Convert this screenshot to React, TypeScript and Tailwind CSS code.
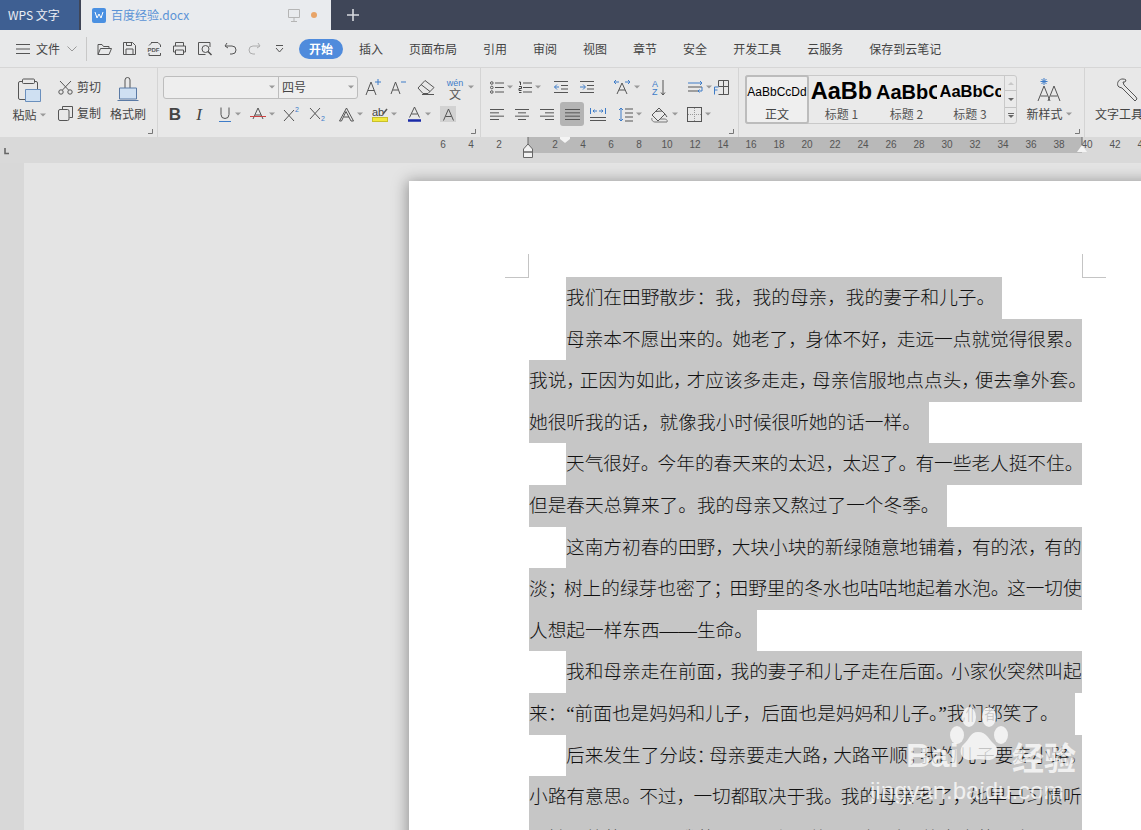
import React from "react";

const FS = 18.67;

type Line = { text: string; indent?: boolean; width: number; fit?: boolean };

const lines: Line[] = [
  { text: "我们在田野散步：我，我的母亲，我的妻子和儿子。", indent: true, width: 436 },
  { text: "母亲本不愿出来的。她老了，身体不好，走远一点就觉得很累。", indent: true, width: 516, fit: true },
  { text: "我说，正因为如此，才应该多走走，母亲信服地点点头，便去拿外套。", width: 553, fit: true },
  { text: "她很听我的话，就像我小时候很听她的话一样。", width: 400 },
  { text: "天气很好。今年的春天来的太迟，太迟了。有一些老人挺不住。", indent: true, width: 516, fit: true },
  { text: "但是春天总算来了。我的母亲又熬过了一个冬季。", width: 418 },
  { text: "这南方初春的田野，大块小块的新绿随意地铺着，有的浓，有的", indent: true, width: 516, fit: true },
  { text: "淡；树上的绿芽也密了；田野里的冬水也咕咕地起着水泡。这一切使", width: 553, fit: true },
  { text: "人想起一样东西——生命。", width: 228 },
  { text: "我和母亲走在前面，我的妻子和儿子走在后面。小家伙突然叫起", indent: true, width: 516, fit: true },
  { text: "来：“前面也是妈妈和儿子，后面也是妈妈和儿子。”我们都笑了。", width: 546 },
  { text: "后来发生了分歧：母亲要走大路，大路平顺；我的儿子要走小路，", indent: true, width: 516, fit: true },
  { text: "小路有意思。不过，一切都取决于我。我的母亲老了，她早已习惯听", width: 553, fit: true },
  { text: "从她强壮的儿子；我的儿子还小，他还习惯听从他高大的父亲；", width: 553, fit: true },
];

const isPunct = (c: string) => "，。：；".includes(c);

const DocLine = ({ line }: { line: Line }) => {
  const chars = Array.from(line.text);
  const count = chars.filter(isPunct).length;
  const squeeze = line.fit && count ? Math.max(0, (chars.length * FS - line.width) / count) : 0;
  return (
    <div className={`h-[41.6px] flex ${line.indent ? "pl-[37px]" : ""}`}>
      <div
        className="bg-[#c6c6c6] h-full whitespace-nowrap overflow-hidden text-[18.67px] leading-[41.6px] font-light text-[#111] [font-family:'Liberation_Serif','Noto_Sans_CJK_SC',serif]"
        style={{ width: line.width }}
      >
        {chars.map((c, i) =>
          isPunct(c) ? (
            <span key={i} style={{ marginRight: -squeeze }}>{c}</span>
          ) : (
            <span key={i}>{c}</span>
          )
        )}
      </div>
    </div>
  );
};

const Svg = ({ w = 18, h = 18, children }: { w?: number; h?: number; children: React.ReactNode }) => (
  <svg width={w} height={h} viewBox={`0 0 ${w} ${h}`} fill="none" stroke="#555" strokeWidth="1" className="shrink-0">
    {children}
  </svg>
);

const Caret = () => (
  <svg width="6" height="4" viewBox="0 0 6 4" className="shrink-0 ml-[3px]">
    <path d="M0 0.5h6L3 3.5z" fill="#999" />
  </svg>
);

const Launcher = () => (
  <svg width="6" height="6" viewBox="0 0 6 6" className="absolute right-[4px] bottom-[3px]">
    <path d="M5.5 1v4.5H1" stroke="#777" fill="none" />
  </svg>
);

// every ribbon button is 24 wide, the icon stays centred and the caret hangs off to the right
const Cell = ({ ml = "", caret, active, children }: { ml?: string; caret?: boolean; active?: boolean; children: React.ReactNode }) => (
  <div className={`flex items-center justify-center w-[24px] h-[24px] shrink-0 ${ml}`}>
    {caret && <span className="w-[9px] shrink-0" />}
    {active ? (
      <div className="w-[24px] h-[24px] rounded-[3px] bg-[#b4b4b4] flex items-center justify-center shrink-0">{children}</div>
    ) : (
      children
    )}
    {caret && <Caret />}
  </div>
);

const HLines = ({ rows }: { rows: [number, number][] }) => (
  <>
    {rows.map(([x, w], i) => (
      <path key={i} d={`M${x} ${1.5 + i * (10 / (rows.length - 1))}h${w}`} />
    ))}
  </>
);

const QuickIcons = () => (
  <div className="flex items-center gap-[10px] ml-[10px]">
    <Svg w={15} h={14}><path d="M1 12.500V2.500h4l1.500 2h5.500v2M1 12.500l2.500-6h11l-2.500 6z" /></Svg>
    <Svg w={15} h={15}><path d="M1.500 1.500h9l3 3v9h-12zM4 13.500V8h7v5.500M4.500 1.500v3h5v-3" /></Svg>
    <Svg w={15} h={16}>
      <path d="M4 1.500h7l2.500 2.500v2M2 12v2.500h11.500V12M5 1.500L2 4.500" />
      <text x="0.500" y="11" fontSize="6" fontWeight="700" fill="#555" stroke="none" fontFamily="Liberation Sans">PDF</text>
    </Svg>
    <Svg w={15} h={15}><path d="M3.500 5V1.500h8V5M3.500 11H1.500V5h12v6h-2M3.500 9h8v4.500h-8z" /></Svg>
    <Svg w={16} h={15}><path d="M13 6V1.500H1.500v12h7" /><circle cx="8.500" cy="8" r="3.500" /><path d="M11 10.500l3.500 3.500" stroke="#4a4a4a" strokeWidth="1.400" /></Svg>
    <div className="ml-[1px]">
      <Svg w={14} h={13}><path d="M3 1L1 4l3 2M1.500 4H8a4 4 0 0 1 0 8H6" /></Svg>
    </div>
    <div className="ml-[-1px] opacity-40">
      <Svg w={14} h={13}><path d="M11 1l2 3-3 2M12.500 4H6a4 4 0 0 0 0 8h2" /></Svg>
    </div>
    <div className="ml-[4px]">
      <Svg w={9} h={9}><path d="M1 1.500h7M1 4l3.500 4L8 4" /></Svg>
    </div>
  </div>
);

const tabs = ["插入", "页面布局", "引用", "审阅", "视图", "章节", "安全", "开发工具", "云服务", "保存到云笔记"];

const FontRowTwo = () => (
  <div className="flex items-center">
    <Cell><span className="text-[17px] font-bold text-[#444] leading-none [font-family:'Liberation_Sans',sans-serif]">B</span></Cell>
    <Cell><span className="text-[17px] italic text-[#444] leading-none [font-family:'Liberation_Serif',serif]">I</span></Cell>
    <Cell ml="ml-[2px]" caret>
      <Svg w={14} h={17}><path d="M3 1.500v7a4 4 0 0 0 8 0v-7" /><path d="M1 15.500h12" stroke="#3e7cc8" /></Svg>
    </Cell>
    <Cell ml="ml-[9px]" caret>
      <Svg w={16} h={16}><path d="M3 13L8 2l5 11M5 9h6" /><path d="M0 10.500h16" stroke="#c44" /></Svg>
    </Cell>
    <Cell ml="ml-[10px]">
      <Svg w={18} h={16}><path d="M1 4l10 11M11 4L1 15" /><text x="12" y="6" fontSize="7" fill="#3e7cc8" stroke="none" fontFamily="Liberation Sans">2</text></Svg>
    </Cell>
    <Cell ml="ml-[2px]">
      <Svg w={18} h={16}><path d="M1 2l10 11M11 2L1 13" /><text x="12" y="15" fontSize="7" fill="#3e7cc8" stroke="none" fontFamily="Liberation Sans">2</text></Svg>
    </Cell>
    <Cell ml="ml-[4px]" caret>
      <Svg w={15} h={15}><path d="M2.500 14h-2L7.500 1l7 13h-2.500l-5-9.500zM5 10h5" /></Svg>
    </Cell>
    <Cell ml="ml-[10px]" caret>
      <Svg w={16} h={16}>
        <rect x="0.500" y="11.500" width="15" height="4" fill="#f2e93c" stroke="#c9c02a" />
        <text x="0" y="10" fontSize="11" fill="#444" stroke="none" fontFamily="Liberation Sans">ab</text>
        <path d="M11 8l4-5" stroke="#555" strokeWidth="1.500" />
      </Svg>
    </Cell>
    <Cell ml="ml-[10px]" caret>
      <Svg w={15} h={16}><path d="M2.500 11.500L7.500 1l5 10.500M4.500 8h6" /><path d="M1 14.500h13" stroke="#1a2aa8" strokeWidth="2.500" /></Svg>
    </Cell>
    <Cell ml="ml-[10px]">
      <div className="w-[16px] h-[16px] bg-[#d2d2d2] flex items-center justify-center">
        <Svg w={13} h={13}><path d="M1.500 12.500L6.500 1l5 11.500M3.500 8.500h6" /></Svg>
      </div>
    </Cell>
  </div>
);

const ParaRowOne = () => (
  <div className="flex items-center">
    <Cell caret>
      <Svg w={14} h={13}><circle cx="1.800" cy="2" r="1.300" /><circle cx="1.800" cy="6.500" r="1.300" /><circle cx="1.800" cy="11" r="1.300" /><path d="M5 2h9M5 6.500h9M5 11h9" /></Svg>
    </Cell>
    <Cell ml="ml-[4px]" caret>
      <Svg w={14} h={13}><path d="M1 1h1.500v3M1 5.500h2.500v2H1v2h2.500M1 11.500h2.500" stroke="#444" /><path d="M5 2h9M5 6.500h9M5 11h9" /></Svg>
    </Cell>
    <Cell ml="ml-[12px]"><Svg w={14} h={12}><path d="M0 .5h14M7 4.500h7M7 8h7M0 11.500h14" /><path d="M5 6H0.500M3 3.500L.5 6 3 8.500" stroke="#3e7cc8" /></Svg></Cell>
    <Cell ml="ml-[2px]"><Svg w={14} h={12}><path d="M0 .5h14M7 4.500h7M7 8h7M0 11.500h14" /><path d="M0 6h5M3 3.500L5.500 6 3 8.500" stroke="#3e7cc8" /></Svg></Cell>
    <Cell ml="ml-[11px]" caret>
      <Svg w={18} h={16}><path d="M4 15L9 4l5 11M6 11h6" /><path d="M1 3h5M3 1L1 3l2 2M17 3h-5M15 1l2 2-2 2" stroke="#3e7cc8" /></Svg>
    </Cell>
    <Cell ml="ml-[13px]">
      <Svg w={14} h={17}><text x="0" y="8" fontSize="9" fill="#3e7cc8" stroke="none" fontFamily="Liberation Sans">A</text><text x="0" y="16" fontSize="9" fill="#3e7cc8" stroke="none" fontFamily="Liberation Sans">Z</text><path d="M11 1v15M9 13.500l2 2.500 2-2.500" /></Svg>
    </Cell>
    <Cell ml="ml-[12px]" caret>
      <Svg w={15} h={14}><path d="M0 3h14M12 1l2 2-2 2" stroke="#3e7cc8" /><path d="M0 7h14M0 11h10" /><path d="M14 7v4h-4M11.500 9.500L10 11l1.500 1.500" stroke="#3e7cc8" /></Svg>
    </Cell>
    <Cell ml="ml-[2px]">
      <Svg w={17} h={17}><path d="M5.500 1.500h10v14h-10M5.500 1.500v6h10M10.500 1.500v14" /><path d="M1.500 8h4M1.500 8v7.500M1.500 11h3" stroke="#3e7cc8" /></Svg>
    </Cell>
  </div>
);

const Align = ({ rows }: { rows: [number, number][] }) => (
  <Svg w={15} h={13}><HLines rows={rows} /></Svg>
);

const ParaRowTwo = () => (
  <div className="flex items-center">
    <Cell><Align rows={[[0, 14], [0, 9], [0, 14], [0, 9]]} /></Cell>
    <Cell ml="ml-[1px]"><Align rows={[[0, 14], [3, 8], [0, 14], [3, 8]]} /></Cell>
    <Cell ml="ml-[1px]"><Align rows={[[0, 14], [5, 9], [0, 14], [5, 9]]} /></Cell>
    <Cell ml="ml-[1px]" active><Align rows={[[0, 15], [0, 15], [0, 15], [0, 15]]} /></Cell>
    <Cell ml="ml-[2px]">
      <Svg w={16} h={14}><path d="M0 10.500h16M0 13.500h16" /><path d="M.5 1v6M15.500 1v6M3 4h4M3 4l1.500-1.500M3 4l1.500 1.500M13 4H9M13 4l-1.500-1.500M13 4l-1.500 1.500" stroke="#3e7cc8" /></Svg>
    </Cell>
    <Cell ml="ml-[3px]" caret>
      <Svg w={15} h={15}><path d="M7 2h8M7 6h8M7 10h8M7 14h8" /><path d="M3 1v13M1 3l2-2 2 2M1 12l2 2 2-2" stroke="#3e7cc8" /></Svg>
    </Cell>
    <Cell ml="ml-[11px]" caret>
      <Svg w={18} h={17}><path d="M1 9l7-7 6 6-7 7zM4 5.500L11 5" /><path d="M1 12c-1 2 1 4 3 4h12c1-2-1-3-3-3H9" stroke="#777" /><path d="M14 8l2 3" /></Svg>
    </Cell>
    <Cell ml="ml-[10px]" caret>
      <Svg w={15} h={15}><rect x="0.500" y="0.500" width="14" height="14" /><path d="M7.500 1v13M1 7.500h13" stroke="#999" strokeDasharray="1 1" /></Svg>
    </Cell>
  </div>
);

const GalleryItem = ({ label, sample, cls, w }: { label: string; sample: string; cls: string; w: string }) => (
  <div className={`flex flex-col items-center shrink-0 overflow-hidden ${w}`}>
    <div className={`h-[31px] flex items-center whitespace-nowrap text-black font-bold [font-family:'Liberation_Sans',sans-serif] ${cls}`}>{sample}</div>
    <div className="text-[12px] leading-[14px] text-[#555] whitespace-nowrap">{label}</div>
  </div>
);

const ScrollBtn = ({ h, children, last }: { h: string; children: React.ReactNode; last?: boolean }) => (
  <div className={`flex items-center justify-center ${h} ${last ? "" : "border-b border-[#c4c4c4]"}`}>
    {children}
  </div>
);

const StyleGallery = () => (
  <div className="ml-[6px] mt-[7px] w-[272px] h-[49px] flex rounded-[3px] border border-[#c9c9c9] bg-[#eaeaea] shrink-0">
    <div className="w-[60px] h-[45px] -my-px -ml-px flex flex-col items-center rounded-[3px] border-2 border-[#bcbcbc] bg-[#efefef] shrink-0 box-content">
      <div className="h-[30px] flex items-center text-[12px] text-black [font-family:'Liberation_Sans',sans-serif]">AaBbCcDd</div>
      <div className="text-[12px] leading-[14px] text-[#444]">正文</div>
    </div>
    <GalleryItem label="标题 1" sample="AaBb" cls="text-[23.500px]" w="w-[65px]" />
    <GalleryItem label="标题 2" sample="AaBbCc" cls="text-[20px] w-[61px] overflow-hidden" w="w-[65px]" />
    <GalleryItem label="标题 3" sample="AaBbCcDd" cls="text-[16.500px] w-[61px] overflow-hidden" w="w-[62px]" />
    <div className="w-[12px] ml-auto border-l border-[#c9c9c9] flex flex-col shrink-0">
      <ScrollBtn h="h-[15px]"><span className="w-0 h-0 border-x-[3px] border-x-transparent border-b-[3px] border-b-[#c8c8c8]" /></ScrollBtn>
      <ScrollBtn h="h-[17px]"><span className="w-0 h-0 border-x-[3px] border-x-transparent border-t-[3px] border-t-[#666]" /></ScrollBtn>
      <ScrollBtn h="h-[15px]" last><span className="w-[6px] h-[6px] border-t border-[#666] flex items-center justify-center"><span className="w-0 h-0 border-x-[3px] border-x-transparent border-t-[3px] border-t-[#666]" /></span></ScrollBtn>
    </div>
  </div>
);

const rulerNums = [6, 4, 2, 0, ...Array.from({ length: 22 }, (_, i) => (i + 1) * 2)];

export default function App() {
  return (
    <div className="w-[1141px] h-[830px] overflow-hidden flex flex-col bg-[#e4e4e4] relative text-[#444] [font-family:'Noto_Sans_CJK_SC','Liberation_Sans',sans-serif]">
      {/* title bar */}
      <div className="h-[30px] bg-[#3f4658] flex shrink-0">
        <div className="w-[79px] bg-[#3e5f92] text-white/90 text-[12px] leading-[30px] pl-[8px] whitespace-pre">WPS 文字</div>
        <div className="ml-[2px] w-[250px] bg-[#e9ebee] flex items-center pl-[11px] pr-[11px]">
          <div className="w-[14px] h-[15px] rounded-[2px] bg-[#4a90e2] flex items-center justify-center shrink-0">
            <svg width="10" height="8" viewBox="0 0 10 8" fill="none" stroke="#fff" strokeWidth="1"><path d="M1 1l2 6 2-4 2 4 2-6" /></svg>
          </div>
          <span className="ml-[5px] text-[12px] text-[#5b93d6]">百度经验.docx</span>
          <svg width="12" height="13" viewBox="0 0 12 13" fill="none" stroke="#b5b5b5" className="ml-[99px]"><path d="M.5.500h11v8H.5zM6 8.500v3.500M3 12.500h6" /></svg>
          <span className="ml-[11px] w-[6px] h-[6px] rounded-full bg-[#e8a468]" />
        </div>
        <div className="ml-[16px] flex items-center">
          <svg width="12" height="12" viewBox="0 0 12 12" stroke="#d8dadf" strokeWidth="1.600"><path d="M6 0v12M0 6h12" /></svg>
        </div>
      </div>

      {/* menu row */}
      <div className="h-[38px] bg-[#e8e9ea] border-b border-[#d6d6d6] flex items-center shrink-0 text-[12px]">
        <div className="ml-[16px] flex items-center">
          <svg width="14" height="10" viewBox="0 0 14 10" stroke="#555"><path d="M0 .5h14M0 5h14M0 9.500h14" /></svg>
          <span className="ml-[6px]">文件</span>
          <svg width="10" height="6" viewBox="0 0 10 6" fill="none" stroke="#999" className="ml-[7px]"><path d="M.5.500L5 5 9.500.5" /></svg>
        </div>
        <div className="ml-[9px] w-px h-[24px] bg-[#c8c8c8]" />
        <QuickIcons />
        <div className="ml-[15px] w-[44px] h-[20px] rounded-full bg-[#4f8bdc] text-white font-bold text-center leading-[20px]">开始</div>
        <div className="ml-[16px] flex gap-[26px]">
          {tabs.map((t) => <span key={t} className="leading-[20px]">{t}</span>)}
        </div>
      </div>

      {/* ribbon */}
      <div className="h-[69px] bg-[#e8e8e8] flex shrink-0 overflow-hidden">
        {/* clipboard */}
        <div className="w-[158px] relative border-r border-[#d4d4d4] flex shrink-0 text-[12px]">
          <div className="w-[57px] flex flex-col items-center pt-[10px] pl-[1px]">
            <svg width="23" height="25" viewBox="0 0 23 25" fill="none" stroke="#555">
              <path d="M5 3.500H2a1.500 1.500 0 0 0-1.500 1.500v15A1.500 1.500 0 0 0 2 21.500h5M16 3.500h2a1.500 1.500 0 0 1 1.500 1.500v6" />
              <rect x="4.500" y="1" width="12" height="4.500" rx="1" />
              <path d="M7.500 11.500h15v12h-15z" fill="#cfe0f2" stroke="#6a8fbd" />
            </svg>
            <div className="mt-[4px] flex items-center leading-[16px]">粘贴<Caret /></div>
          </div>
          <div className="w-[52px] flex flex-col pl-[1px] pt-[10px] gap-[8px]">
            <div className="flex items-center h-[18px] gap-[4px]">
              <svg width="15" height="15" viewBox="0 0 15 15" fill="none" stroke="#555"><circle cx="3" cy="12" r="2.200" /><circle cx="12" cy="12" r="2.200" /><path d="M4.500 10L13 1M10.500 10L2 1" /></svg>
              <span>剪切</span>
            </div>
            <div className="flex items-center h-[18px] gap-[4px]">
              <svg width="15" height="15" viewBox="0 0 15 15" fill="none" stroke="#555"><path d="M4.500 3.500V.5h10v11h-3" /><rect x="0.500" y="3.500" width="10.500" height="11" rx="1.500" /></svg>
              <span>复制</span>
            </div>
          </div>
          <div className="flex flex-col items-center w-[38px] pt-[9px]">
            <svg width="22" height="25" viewBox="0 0 22 25" fill="none" stroke="#5a7aa5">
              <path d="M8 11V3a2.500 2.500 0 0 1 5 0v8" stroke="#555" />
              <path d="M2.500 11h17v11h-17z" fill="#cfe0f2" />
              <path d="M.5 23.500h21" />
            </svg>
            <div className="mt-[4px] leading-[16px] whitespace-nowrap">格式刷</div>
          </div>
          <Launcher />
        </div>

        {/* font */}
        <div className="w-[323px] relative border-r border-[#d4d4d4] pl-[5px] pt-[7px] shrink-0">
          <div className="flex items-center h-[24px]">
            <div className="w-[195px] h-[23px] rounded-[3px] border border-[#bdbdbd] bg-[#eeeeee] flex text-[12px]">
              <div className="w-[115px] flex items-center justify-end pr-[3px] border-r border-[#bdbdbd]"><Caret /></div>
              <div className="flex-1 flex items-center justify-between pl-[3px] pr-[3px]">四号<Caret /></div>
            </div>
            <div className="ml-[7px]">
              <Svg w={17} h={18}><path d="M1 17L6 4l5 13M3 12.500h6" /><path d="M13 1v6M10 4h6" stroke="#3e7cc8" /></Svg>
            </div>
            <div className="ml-[8px]">
              <Svg w={16} h={16}><path d="M1 15L5.500 3l4.500 12M3 11h5" /><path d="M11 3h5" stroke="#3e7cc8" /></Svg>
            </div>
            <div className="ml-[11px]">
              <Svg w={18} h={16}><path d="M1 9l7-7.500 9 7-6 6H6z" /><path d="M4 5.500l9 7M5 15.500h12" /></Svg>
            </div>
            <div className="ml-[10px] flex items-center">
              <div className="flex flex-col items-center text-[#3e7cc8] text-[9px] leading-[9px] w-[20px] pt-[3px]">
                <span className="[font-family:'Liberation_Sans',sans-serif]">wén</span>
                <span className="text-[#555] text-[12px] leading-[11px]">文</span>
              </div>
              <Caret />
            </div>
          </div>
          <div className="mt-[3px]"><FontRowTwo /></div>
          <Launcher />
        </div>

        {/* paragraph */}
        <div className="w-[258px] relative border-r border-[#d4d4d4] pl-[4px] pt-[7px] shrink-0">
          <ParaRowOne />
          <div className="mt-[3px]"><ParaRowTwo /></div>
          <Launcher />
        </div>

        <StyleGallery />

        {/* new style */}
        <div className="w-[68px] relative border-r border-[#d4d4d4] flex flex-col items-center pt-[9px] pr-[3px] shrink-0 text-[12px]">
          <svg width="24" height="25" viewBox="0 0 24 25" fill="none" stroke="#555">
            <path d="M1 24L7 9l6 15M3.500 19h7M11 24L17 9l6 15M13.500 19h7" />
            <path d="M7 1v7M3.500 4.500h7M4.500 2l5 5M9.500 2l-5 5" stroke="#3e7cc8" />
          </svg>
          <div className="mt-[4px] flex items-center leading-[16px]">新样式<Caret /></div>
          <Launcher />
        </div>

        {/* tools */}
        <div className="pl-[10px] flex flex-col items-center pt-[10px] text-[12px] shrink-0">
          <svg width="22" height="24" viewBox="0 0 22 24" fill="none" stroke="#555" className="ml-[16px]">
            <path d="M7 1a5 5 0 0 0-5 7l1 1 3 1 13 13 2-2-1-2L8 7l-1-3 2 0 1-2a5 5 0 0 0-3-1z" />
          </svg>
          <div className="mt-[4px] leading-[16px] whitespace-nowrap">文字工具</div>
        </div>
      </div>

      {/* ruler */}
      <div className="h-[26px] bg-[#d9d9d9] shrink-0 relative">
        <div className="absolute left-[528px] top-0 w-[554px] h-[16px] bg-[#b9b9b9]" />
        <div className="relative h-[16px] flex pl-[429px]">
          {rulerNums.map((n, i) => (
            <span key={i} className="w-[28px] shrink-0 text-center text-[10px] leading-[16px] text-[#555] [font-family:'Liberation_Sans',sans-serif]">
              {n === 0 ? "" : n}
            </span>
          ))}
        </div>
        <svg width="10" height="8" viewBox="0 0 10 8" className="absolute left-[3px] top-[11px]" fill="none" stroke="#666" strokeWidth="1.600"><path d="M2 0v5.500h4" /></svg>
        {/* indent markers */}
        <svg width="12" height="22" viewBox="0 0 12 22" className="absolute left-[522px] top-0" fill="#f2f2f2" stroke="#666">
          <path d="M6 0v8" fill="none" />
          <path d="M1.500 12L6 7l4.500 5v3h-9zM1.500 15h9v5.500h-9z" />
        </svg>
        <svg width="10" height="6" viewBox="0 0 10 6" className="absolute left-[560px] top-0" fill="#f4f4f4"><path d="M0 0h10v2L5 6 0 2z" /></svg>
        <svg width="12" height="16" viewBox="0 0 12 16" className="absolute left-[1076px] top-0" fill="#f4f4f4" stroke="#666">
          <path d="M6 0v8" fill="none" />
          <path d="M1 15L6 8l5 7z" stroke="none" />
        </svg>
      </div>

      {/* document area */}
      <div className="flex-1 flex min-h-0">
        <div className="w-[24px] bg-[#d8d8d8] shrink-0" />
        <div className="flex-1 bg-[#e4e4e4] pt-[18px] pl-[385px] overflow-hidden">
          <div className="relative w-[800px] h-[700px] bg-white pt-[96px] pl-[120px] shadow-[-2px_0_14px_rgba(0,0,0,0.35)]">
            <div className="absolute left-[96px] top-[73px] w-[24px] h-[24px] border-r border-b border-[#c4c4c4]" />
            <div className="absolute left-[673px] top-[73px] w-[24px] h-[24px] border-l border-b border-[#c4c4c4]" />
            <div className="w-[553px]">
              {lines.map((l, i) => <DocLine key={i} line={l} />)}
            </div>
          </div>
        </div>
      </div>

      {/* watermark */}
      <div className="absolute left-[850px] top-[705px] w-[250px] h-[100px] text-white/75 pointer-events-none">
        <svg width="60" height="62" viewBox="0 0 60 62" fill="currentColor" className="absolute left-[98px] top-0">
          <ellipse cx="9" cy="30" rx="7" ry="9" />
          <ellipse cx="21" cy="12" rx="7" ry="10" />
          <ellipse cx="41" cy="12" rx="7" ry="10" />
          <ellipse cx="53" cy="30" rx="7" ry="9" />
          <path d="M30 27c-8 0-9 8-14 12-6 5-4 16 6 16 4 0 6-1 9-1s5 1 9 1c10 0 12-11 6-16-5-4-7-12-16-12z" />
        </svg>
        <div className="absolute left-[56px] top-[30px] text-[34px] leading-[40px] font-bold [font-family:'Liberation_Sans',sans-serif]">Bai</div>
        <div className="absolute left-[162px] top-[32px] text-[32px] leading-[38px] font-bold whitespace-nowrap">经验</div>
        <div className="absolute left-[20px] top-[72px] text-[24px] leading-[28px] whitespace-nowrap [font-family:'Liberation_Sans',sans-serif]">jingyan.baidu.com</div>
      </div>
    </div>
  );
}
